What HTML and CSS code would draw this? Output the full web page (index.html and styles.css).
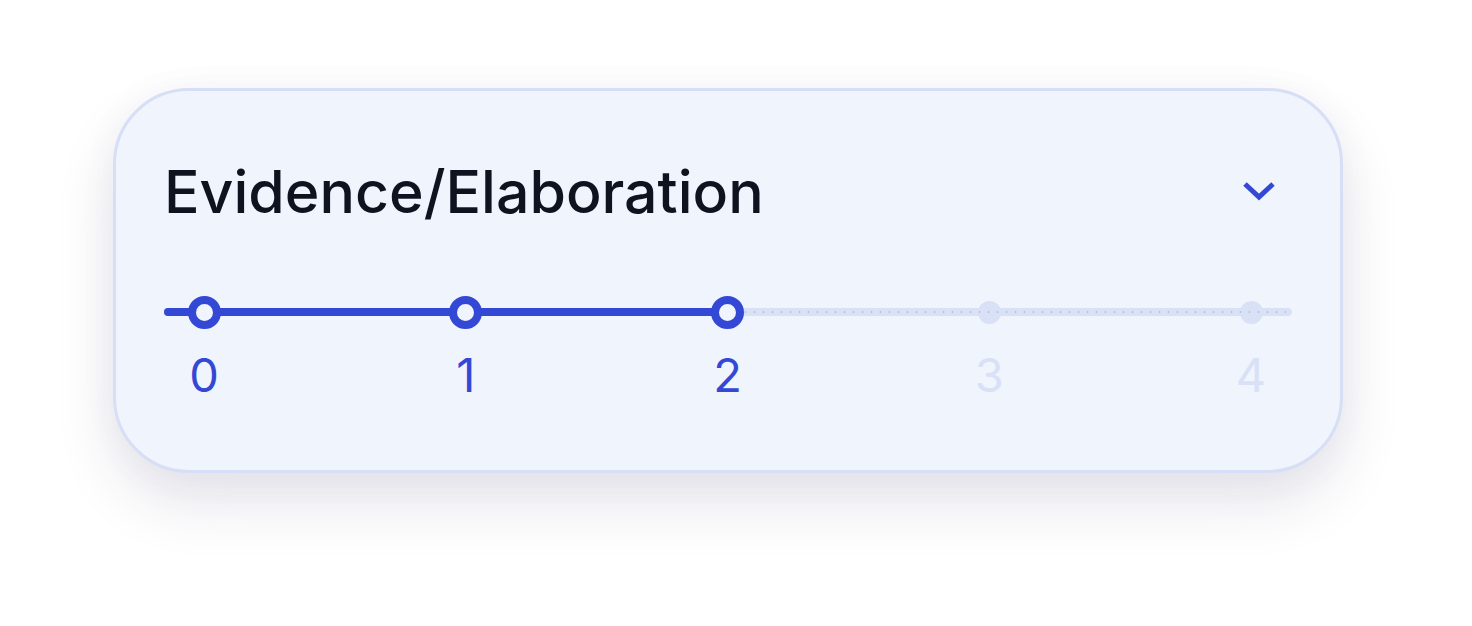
FILE: index.html
```html
<!DOCTYPE html>
<html lang="en">
<head>
<meta charset="utf-8">
<title>Evidence/Elaboration</title>
<link rel="stylesheet" href="styles.css">
</head>
<body>
<main class="page">
  <section class="card">
    <header class="card-head">
      <h2 class="title">Evidence/Elaboration</h2>
      <button class="toggle" aria-label="Collapse">
        <svg width="34" height="20" viewBox="0 0 34 20" fill="none">
          <path d="M3 3 L17 16 L31 3" stroke="#3448d6" stroke-width="5" stroke-linecap="butt" stroke-linejoin="miter"/>
        </svg>
      </button>
    </header>
    <div class="scale">
      <div class="track">
        <div class="track-fill" style="width: 49.6%"></div>
        <div class="track-dots" style="left: calc(49.6% + 18px)"></div>
      </div>
      <ol class="steps">
        <li class="step done"><span class="dot"></span><span class="label">0</span></li>
        <li class="step done"><span class="dot"></span><span class="label">1</span></li>
        <li class="step done"><span class="dot"></span><span class="label">2</span></li>
        <li class="step"><span class="dot"></span><span class="label">3</span></li>
        <li class="step"><span class="dot"></span><span class="label">4</span></li>
      </ol>
    </div>
  </section>
</main>
</body>
</html>
```

FILE: styles.css
```css
*, *::before, *::after { box-sizing: border-box; }
html, body {
  margin: 0;
  padding: 0;
  background: #ffffff;
  font-family: Inter, "Noto Sans", "Liberation Sans", sans-serif;
}
.page {
  min-height: 626px;
  padding: 88px 129px 120px 113px;
}
.card {
  width: 1230px;
  height: 385px;
  background: #f0f4fd;
  border: 3px solid #d6dff5;
  border-radius: 76px;
  padding: 64px 48px 0 48px;
  box-shadow: 0 30px 60px rgba(40, 45, 90, 0.12), 0 4px 40px rgba(40, 45, 90, 0.04);
}
.card-head {
  display: flex;
  align-items: center;
  justify-content: space-between;
  height: 72px;
}
.title {
  margin: 0;
  font-size: 59px;
  font-weight: 500;
  color: #0f1320;
  letter-spacing: 0;
  line-height: 1;
}
.toggle {
  border: 0;
  background: none;
  padding: 0;
  margin-right: 16px;
  width: 34px;
  height: 20px;
  display: flex;
}
.scale {
  position: relative;
  margin-top: 68px;
}
.track {
  position: absolute;
  left: 0;
  right: 0;
  top: 13px;
  height: 8px;
  border-radius: 4px;
  background: #d8e1f6;
}
.track-fill {
  position: absolute;
  left: 0;
  top: 0;
  bottom: 0;
  background: #3448d6;
  border-radius: 4px 0 0 4px;
}
.track-dots {
  position: absolute;
  right: 6px;
  top: 3px;
  height: 2px;
  z-index: 2;
  background-image: radial-gradient(circle, rgba(150, 160, 190, 0.5) 0.8px, transparent 1.2px);
  background-size: 9px 2px;
}
.steps {
  position: relative;
  list-style: none;
  margin: 0;
  padding: 0 25px 0 24px;
  display: flex;
  justify-content: space-between;
}
.step {
  width: 32px;
  display: flex;
  flex-direction: column;
  align-items: center;
}
.dot {
  width: 32px;
  height: 34px;
  display: flex;
  align-items: center;
  justify-content: center;
}
.dot::before {
  content: "";
  flex-shrink: 0;
  width: 23px;
  height: 23px;
  border-radius: 50%;
  background: #d8e1f6;
}
.step.done .dot::before {
  width: 33px;
  height: 33px;
  background: #f0f4fd;
  border: 8px solid #3448d6;
}
.label {
  margin-top: 18px;
  font-size: 47px;
  line-height: 56px;
  font-weight: 400;
  color: #d8e1f6;
}
.step.done .label {
  color: #3448d6;
}
```
